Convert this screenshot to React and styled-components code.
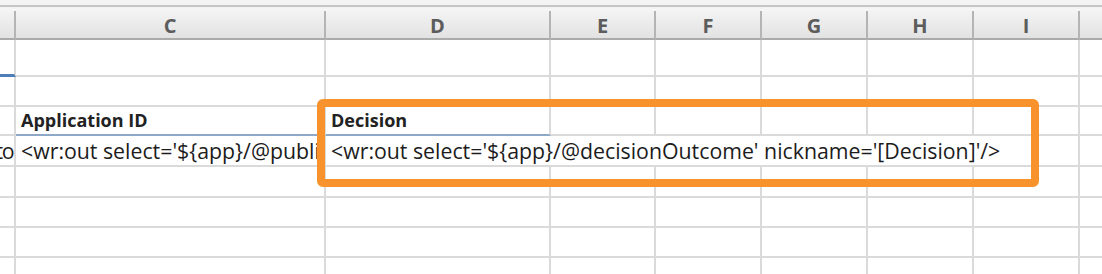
import React from "react";
import styled, { createGlobalStyle } from "styled-components";

const GlobalStyle = createGlobalStyle`
  html, body {
    margin: 0;
    padding: 0;
    background: #ffffff;
    overflow: hidden;
  }
`;

const COLS = [
  { key: "B", width: 16, label: "" },
  { key: "C", width: 310, label: "C" },
  { key: "D", width: 225, label: "D" },
  { key: "E", width: 105, label: "E" },
  { key: "F", width: 106, label: "F" },
  { key: "G", width: 106, label: "G" },
  { key: "H", width: 106, label: "H" },
  { key: "I", width: 106, label: "I" },
  { key: "J", width: 40, label: "" },
];

const ROW_HEIGHTS = [37, 30, 29, 31, 31, 30, 30, 30];

const Page = styled.div`
  width: 1102px;
  height: 274px;
  overflow: hidden;
  font-family: "Open Sans", "Liberation Sans", sans-serif;
`;

const Chrome = styled.div`
  height: 11px;
  background: #f4f4f4;
  display: flex;
  flex-direction: column;
`;

const ChromeRule = styled.div`
  margin-top: 5px;
  height: 2px;
  background: #c6c6c6;
`;

const Sheet = styled.div`
  position: relative;
  display: grid;
  grid-template-columns: ${COLS.map((c) => `${c.width}px`).join(" ")};
  grid-template-rows: 29px ${ROW_HEIGHTS.map((h) => `${h}px`).join(" ")};
`;

const HeaderCell = styled.div`
  display: flex;
  align-items: center;
  justify-content: center;
  background: linear-gradient(#f3f3f3, #e2e2e2);
  border-right: 2px solid #b4b4b4;
  border-bottom: 2px solid #ababab;
  box-sizing: border-box;
  font-size: 20px;
  font-weight: 700;
  color: #5c5c5c;
  padding-top: 1px;
`;

const Cell = styled.div`
  display: flex;
  align-items: flex-end;
  justify-content: ${(p) => (p.$right ? "flex-end" : "flex-start")};
  box-sizing: border-box;
  border-right: 2px solid #dadada;
  border-bottom: ${(p) => p.$under || "2px solid #dadada"};
  padding: 0 ${(p) => (p.$right ? "1px" : "0")} 4px
    ${(p) => (p.$right ? "0" : "5px")};
  overflow: hidden;
  white-space: nowrap;
  font-size: 21.3px;
  letter-spacing: ${(p) => (p.$right ? "-1.5px" : "normal")};
  color: #1c1c1c;
  line-height: 1;
  grid-column: ${(p) => (p.$span ? `span ${p.$span}` : "auto")};
`;

const Label = styled.span`
  font-weight: 700;
  font-size: 18px;
  color: #222;
  margin-bottom: 1px;
`;

const Highlight = styled.div`
  position: absolute;
  left: 317px;
  top: 88px;
  width: 722px;
  height: 88px;
  box-sizing: border-box;
  border: 8px solid #f8922c;
  border-radius: 6px;
  pointer-events: none;
`;

const BLUE_THIN = "2px solid #8ea8c8";
const BLUE_THICK = "3px solid #4f7db8";

const blankRow = (r) =>
  COLS.map((c) => <Cell key={`${r}-${c.key}`} />);

export default function App() {
  return (
    <Page>
      <GlobalStyle />
      <Chrome>
        <ChromeRule />
      </Chrome>
      <Sheet>
        {COLS.map((c) => (
          <HeaderCell key={c.key}>{c.label}</HeaderCell>
        ))}

        {COLS.map((c) => (
          <Cell key={`1-${c.key}`} $under={c.key === "B" ? BLUE_THICK : undefined} />
        ))}

        {blankRow(2)}

        <Cell key="3-B" />
        <Cell key="3-C" $under={BLUE_THIN}>
          <Label>Application ID</Label>
        </Cell>
        <Cell key="3-D" $under={BLUE_THIN}>
          <Label>Decision</Label>
        </Cell>
        {COLS.slice(3).map((c) => (
          <Cell key={`3-${c.key}`} />
        ))}

        <Cell key="4-B" $right>
          to
        </Cell>
        <Cell key="4-C">{"<wr:out select='${app}/@publicationDate'/>"}</Cell>
        <Cell key="4-D" $span={6}>
          {"<wr:out select='${app}/@decisionOutcome' nickname='[Decision]'/>"}
        </Cell>
        <Cell key="4-J" />

        {blankRow(5)}
        {blankRow(6)}
        {blankRow(7)}
        {blankRow(8)}

        <Highlight />
      </Sheet>
    </Page>
  );
}
